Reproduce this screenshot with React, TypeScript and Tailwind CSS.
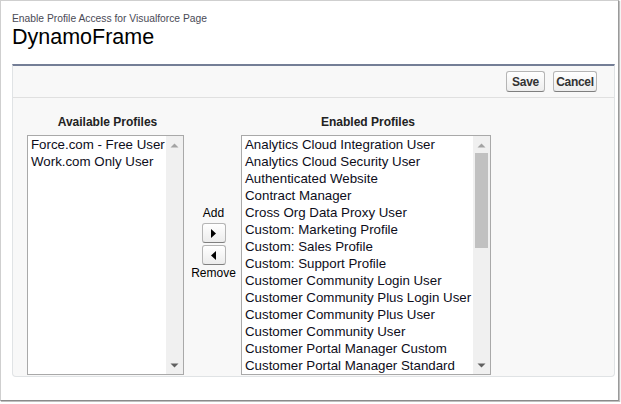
import React from "react";

const available = ["Force.com - Free User", "Work.com Only User"];
const enabled = [
  "Analytics Cloud Integration User",
  "Analytics Cloud Security User",
  "Authenticated Website",
  "Contract Manager",
  "Cross Org Data Proxy User",
  "Custom: Marketing Profile",
  "Custom: Sales Profile",
  "Custom: Support Profile",
  "Customer Community Login User",
  "Customer Community Plus Login User",
  "Customer Community Plus User",
  "Customer Community User",
  "Customer Portal Manager Custom",
  "Customer Portal Manager Standard",
];

function Up() {
  return (
    <svg width="9" height="5" viewBox="0 0 9 5">
      <path d="M0.5 4.5 L4.5 0.5 L8.5 4.5 Z" fill="#a3a3a3" />
    </svg>
  );
}
function Down() {
  return (
    <svg width="9" height="5" viewBox="0 0 9 5">
      <path d="M0.5 0.5 L4.5 4.5 L8.5 0.5 Z" fill="#606060" />
    </svg>
  );
}

function ListBox({ items, width, thumb }: { items: string[]; width: string; thumb: boolean }) {
  return (
    <div className={`${width} h-[240px] border border-[#a9a9a9] bg-white flex`}>
      <div className="flex-1 overflow-hidden pl-[3px]">
        {items.map((t) => (
          <div key={t} className="h-[17px] leading-[17px] text-[13.3px] text-[#0d0d1a] whitespace-nowrap">
            {t}
          </div>
        ))}
      </div>
      <div className="w-[17px] bg-[#f0f0f0] flex flex-col items-center">
        <div className="h-[17px] flex items-center justify-center pt-[1px]">
          <Up />
        </div>
        <div className="flex-1 w-full px-[2px]">
          {thumb && <div className="w-full h-[95px] bg-[#c1c1c1]" />}
        </div>
        <div className="h-[17px] flex items-center justify-center">
          <Down />
        </div>
      </div>
    </div>
  );
}

function SmallBtn({ dir }: { dir: "right" | "left" }) {
  return (
    <div className="w-[24px] h-[20px] rounded-[3px] border border-[#b5b5b5] border-b-[#7f7f7f] bg-gradient-to-b from-white to-[#ececec] flex items-center justify-center">
      <svg width="5" height="9" viewBox="0 0 5 9">
        {dir === "right" ? (
          <path d="M0 0 L5 4.5 L0 9 Z" fill="#000" />
        ) : (
          <path d="M5 0 L0 4.5 L5 9 Z" fill="#000" />
        )}
      </svg>
    </div>
  );
}

function Btn({ label, width }: { label: string; width: string }) {
  return (
    <div
      className={`${width} h-[21px] rounded-[3px] border border-[#b5b5b5] border-b-[#7f7f7f] bg-gradient-to-b from-white to-[#ededed] flex items-center justify-center text-[12px] font-bold text-[#333] tracking-[-0.3px]`}
    >
      {label}
    </div>
  );
}

export default function App() {
  return (
    <div
      className="w-[620px] h-[402px] bg-white"
      style={{ fontFamily: '"Liberation Sans", Arial, sans-serif' }}
    >
      <div className="w-[619px] h-[401px] border border-[#cfcfcf] border-r-[#9a9a9a] border-b-[#8a8a8a] shadow-[1px_1px_1px_rgba(0,0,0,0.25)] pt-[12px]">
        <div className="pl-[11px]">
          <div className="text-[10.3px] leading-[12px] text-[#4a4a56]">Enable Profile Access for Visualforce Page</div>
          <div className="text-[21.5px] leading-[25px] text-black">DynamoFrame</div>
        </div>
        <div className="mt-[14px] ml-[11px] w-[603px] border-t-2 border-t-[#747e96] border-x border-b border-[#e0e3e5] rounded-b-[4px] bg-[#f8f8f8]">
          <div className="h-[32px] flex items-start justify-end gap-[8px] pr-[17px] pt-[5px] border-b border-[#e0e0e0]">
            <Btn label="Save" width="w-[39px]" />
            <Btn label="Cancel" width="w-[44px]" />
          </div>
          <div className="flex pl-[14px] pt-[17px] pb-[1px]">
            <div className="flex flex-col">
              <div className="h-[14px] leading-[14px] text-[12px] font-bold text-[#222] text-center mb-[6px] pl-[4px]">
                Available Profiles
              </div>
              <ListBox items={available} width="w-[157px]" thumb={false} />
            </div>
            <div className="w-[57px] flex flex-col items-center pt-[91px] pl-[2px] text-[12px] text-black">
              <div className="leading-[14px] mb-[3px]">Add</div>
              <SmallBtn dir="right" />
              <div className="h-[2px]" />
              <SmallBtn dir="left" />
              <div className="leading-[14px] mt-[1px]">Remove</div>
            </div>
            <div className="flex flex-col">
              <div className="h-[14px] leading-[14px] text-[12px] font-bold text-[#222] text-center mb-[6px] pl-[4px]">
                Enabled Profiles
              </div>
              <ListBox items={enabled} width="w-[250px]" thumb={true} />
            </div>
          </div>
        </div>
      </div>
    </div>
  );
}
